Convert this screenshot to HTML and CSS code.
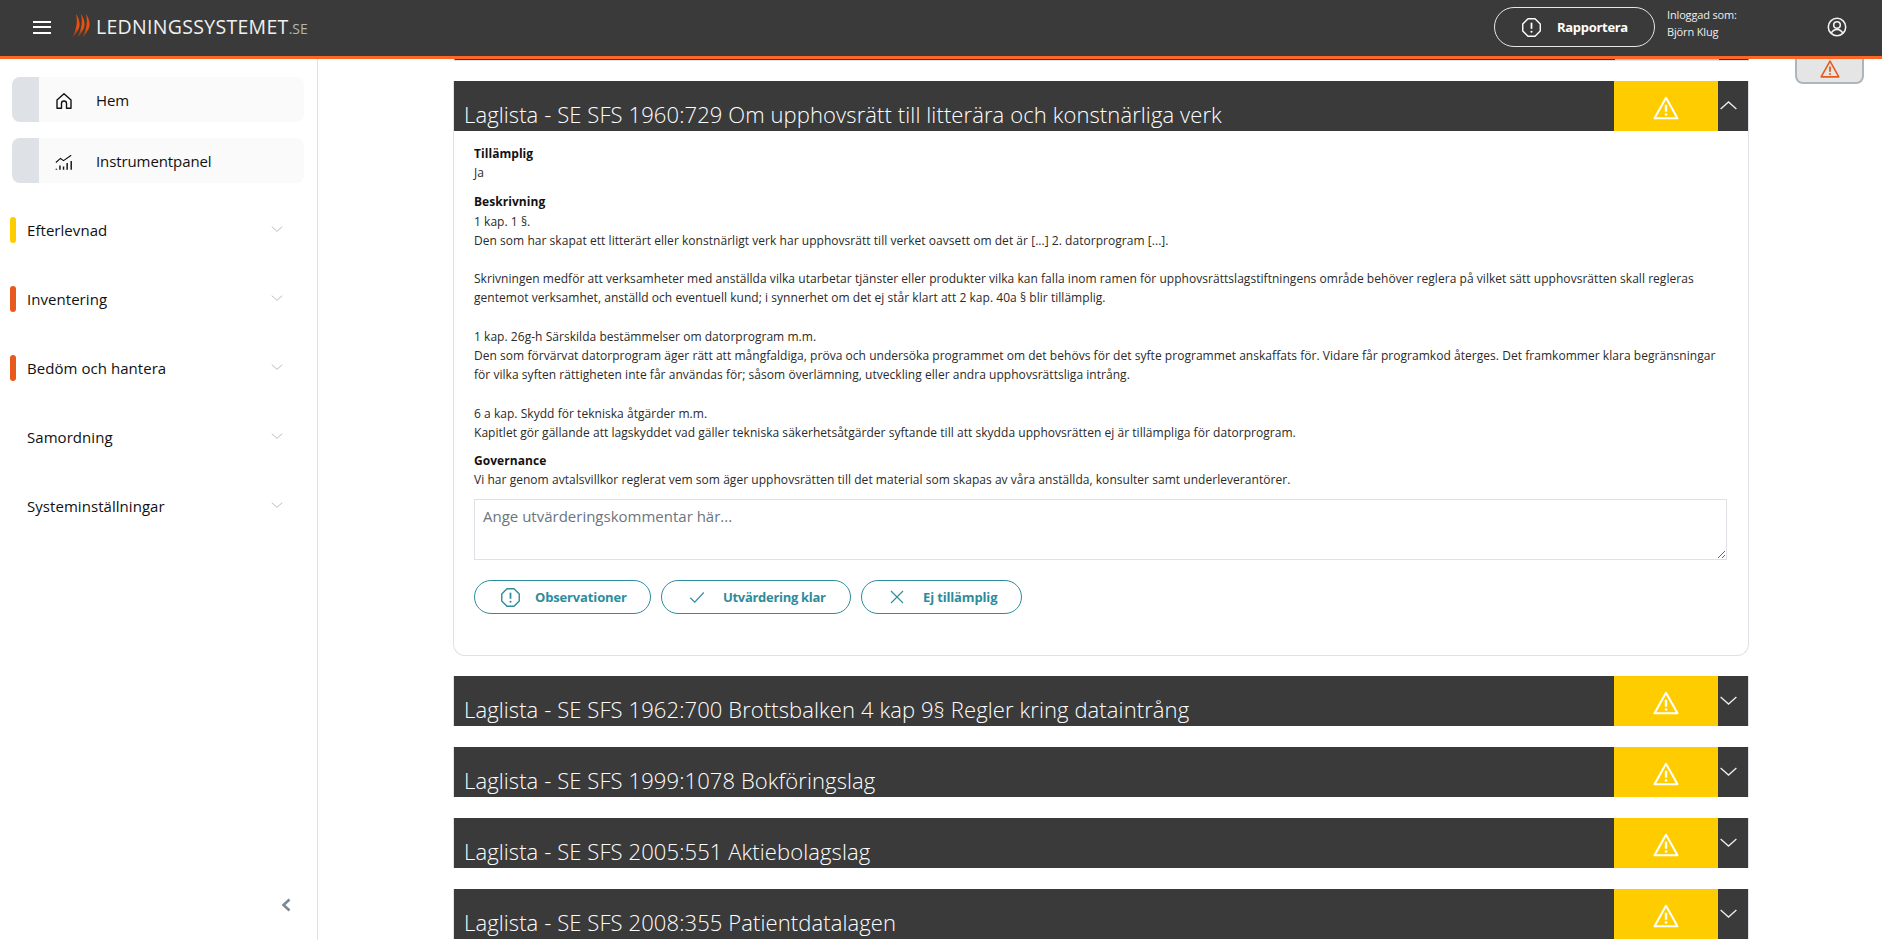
FILE: index.html
```html
<!DOCTYPE html>
<html lang="sv">
<head>
<meta charset="utf-8">
<title>Ledningssystemet</title>
<link rel="stylesheet" href="styles.css">
</head>
<body>
<svg class="defs" width="0" height="0" aria-hidden="true">
  <defs><linearGradient id="flame" x1="0" y1="0" x2="0" y2="1"><stop offset="0" stop-color="#f0500c"/><stop offset=".6" stop-color="#e8500f"/><stop offset="1" stop-color="#5c3b2e"/></linearGradient></defs>
  <symbol id="warn" viewBox="0 0 24 24"><path d="M12 2.600 22.600 21.400H1.400Z" fill="none" stroke="currentColor" stroke-width="1.900" stroke-linejoin="round"/><path d="M12 9v6.400" stroke="currentColor" stroke-width="2.200"/><circle cx="12" cy="18" r="1.200" fill="currentColor"/></symbol>
  <symbol id="octa" viewBox="0 0 24 24"><path d="M8 2h8l6 6v8l-6 6H8l-6-6V8Z" fill="none" stroke="currentColor" stroke-width="1.600" stroke-linejoin="round"/><path d="M12 6.500v7" stroke="currentColor" stroke-width="2"/><circle cx="12" cy="16.800" r="1.200" fill="currentColor"/></symbol>
  <symbol id="chev-d" viewBox="0 0 24 24"><path d="M3 8l9 8 9-8" fill="none" stroke="currentColor" stroke-width="1.500"/></symbol>
  <symbol id="chev-u" viewBox="0 0 24 24"><path d="M3 16l9-8 9 8" fill="none" stroke="currentColor" stroke-width="1.500"/></symbol>
</svg>

<header class="topbar">
  <button class="menu-btn" aria-label="Meny"><span></span><span></span><span></span></button>
  <div class="logo">
    <svg class="logo-mark" viewBox="0 0 20 24" width="20" height="24"><path d="M4 0C8 6 9 12 5.500 17 4 20 2 22 0 24 3 18 6.500 10 4 0Z" fill="url(#flame)"/><path d="M9 0C13 6 14 12 10.500 17 9 20 7 22 5 24 8 18 11.500 10 9 0Z" fill="url(#flame)"/><path d="M14 0C18 6 19 12 15.500 17 14 20 12 22 10 24 13 18 16.500 10 14 0Z" fill="url(#flame)"/></svg>
    <span class="logo-text">LEDNINGSSYSTEMET</span><span class="logo-se">.SE</span>
  </div>
  <div class="top-right">
    <button class="report-btn"><svg class="ic-oct"><use href="#octa"/></svg><span>Rapportera</span></button>
    <div class="user-info"><div>Inloggad som:</div><div>Björn Klug</div></div>
    <svg class="user-ic" viewBox="0 0 24 24" width="22" height="22" fill="none" stroke="currentColor" stroke-width="1.700"><circle cx="12" cy="12" r="9.500"/><circle cx="12" cy="9.800" r="3.600"/><path d="M5.500 19c1.500-3 3.800-4.300 6.500-4.300s5 1.300 6.500 4.300"/></svg>
  </div>
</header>

<div class="layout">
  <aside class="sidebar">
    <nav class="pinned">
      <a class="pin-item"><span class="pin-tab"></span>
        <svg class="pin-ic" viewBox="0 0 18 18" fill="none" stroke="currentColor" stroke-width="1.400"><path d="M2 8 9 1.800 16 8v8.200h-4.500V11.500a2.500 2.500 0 0 0-5 0v4.700H2Z" stroke-linejoin="round"/></svg>
        <span>Hem</span></a>
      <a class="pin-item"><span class="pin-tab"></span>
        <svg class="pin-ic" viewBox="0 0 20 18" fill="none" stroke="currentColor" stroke-width="1.300"><path d="M1 9.500 6 5l3.500 2.500L18 1.500"/><path d="M1.500 16.500v1M5.500 13v4.500M9.500 14v3.500M13.500 10v7.500M18 8v9.500" stroke-width="1.600"/></svg>
        <span>Instrumentpanel</span></a>
    </nav>
    <ul class="groups">
      <li class="group"><span class="mark mark-y"></span><span class="group-name">Efterlevnad</span><svg class="group-chev"><use href="#chev-d"/></svg></li>
      <li class="group"><span class="mark mark-o"></span><span class="group-name">Inventering</span><svg class="group-chev"><use href="#chev-d"/></svg></li>
      <li class="group"><span class="mark mark-o"></span><span class="group-name">Bedöm och hantera</span><svg class="group-chev"><use href="#chev-d"/></svg></li>
      <li class="group"><span class="mark"></span><span class="group-name">Samordning</span><svg class="group-chev"><use href="#chev-d"/></svg></li>
      <li class="group"><span class="mark"></span><span class="group-name">Systeminställningar</span><svg class="group-chev"><use href="#chev-d"/></svg></li>
    </ul>
    <svg class="collapse" viewBox="0 0 12 16" width="12" height="16"><path d="M9.500 2.500 3.500 8l6 5.500" fill="none" stroke="#7b8794" stroke-width="2.600"/></svg>
  </aside>

  <main class="main">
    <div class="stub"><span class="stub-y"></span><span class="stub-d"></span></div>

    <section class="card open">
      <div class="card-head">
        <h2>Laglista - SE SFS 1960:729 Om upphovsrätt till litterära och konstnärliga verk</h2>
        <div class="status"><svg class="ic-24"><use href="#warn"/></svg></div>
        <div class="toggle"><svg class="ic-chev"><use href="#chev-u"/></svg></div>
      </div>
      <div class="card-body">
        <h3>Tillämplig</h3>
        <p>Ja</p>
        <h3>Beskrivning</h3>
        <p class="desc">1 kap. 1 §.<br>
        Den som har skapat ett litterärt eller konstnärligt verk har upphovsrätt till verket oavsett om det är [...] 2. datorprogram [...].<br><br>
        Skrivningen medför att verksamheter med anställda vilka utarbetar tjänster eller produkter vilka kan falla inom ramen för upphovsrättslagstiftningens område behöver reglera på vilket sätt upphovsrätten skall regleras gentemot verksamhet, anställd och eventuell kund; i synnerhet om det ej står klart att 2 kap. 40a § blir tillämplig.<br><br>
        1 kap. 26g-h Särskilda bestämmelser om datorprogram m.m.<br>
        Den som förvärvat datorprogram äger rätt att mångfaldiga, pröva och undersöka programmet om det behövs för det syfte programmet anskaffats för. Vidare får programkod återges. Det framkommer klara begränsningar för vilka syften rättigheten inte får användas för; såsom överlämning, utveckling eller andra upphovsrättsliga intrång.<br><br>
        6 a kap. Skydd för tekniska åtgärder m.m.<br>
        Kapitlet gör gällande att lagskyddet vad gäller tekniska säkerhetsåtgärder syftande till att skydda upphovsrätten ej är tillämpliga för datorprogram.</p>
        <h3>Governance</h3>
        <p>Vi har genom avtalsvillkor reglerat vem som äger upphovsrätten till det material som skapas av våra anställda, konsulter samt underleverantörer.</p>
        <textarea class="comment" placeholder="Ange utvärderingskommentar här..."></textarea>
        <div class="actions">
          <button class="action a1"><svg class="ic-oct"><use href="#octa"/></svg><span>Observationer</span></button>
          <button class="action a2"><svg class="ic-18" viewBox="0 0 24 24" fill="none" stroke="currentColor" stroke-width="1.500"><path d="M3 13l6 6L21 6"/></svg><span>Utvärdering klar</span></button>
          <button class="action a3"><svg class="ic-18" viewBox="0 0 24 24" fill="none" stroke="currentColor" stroke-width="1.500"><path d="M4 4l16 16M20 4 4 20"/></svg><span>Ej tillämplig</span></button>
        </div>
      </div>
    </section>

    <section class="card closed"><div class="card-head"><h2>Laglista - SE SFS 1962:700 Brottsbalken 4 kap 9§ Regler kring dataintrång</h2><div class="status"><svg class="ic-24"><use href="#warn"/></svg></div><div class="toggle"><svg class="ic-chev"><use href="#chev-d"/></svg></div></div></section>
    <section class="card closed"><div class="card-head"><h2>Laglista - SE SFS 1999:1078 Bokföringslag</h2><div class="status"><svg class="ic-24"><use href="#warn"/></svg></div><div class="toggle"><svg class="ic-chev"><use href="#chev-d"/></svg></div></div></section>
    <section class="card closed"><div class="card-head"><h2>Laglista - SE SFS 2005:551 Aktiebolagslag</h2><div class="status"><svg class="ic-24"><use href="#warn"/></svg></div><div class="toggle"><svg class="ic-chev"><use href="#chev-d"/></svg></div></div></section>
    <section class="card closed"><div class="card-head"><h2>Laglista - SE SFS 2008:355 Patientdatalagen</h2><div class="status"><svg class="ic-24"><use href="#warn"/></svg></div><div class="toggle"><svg class="ic-chev"><use href="#chev-d"/></svg></div></div></section>
  </main>

  <div class="side-tab"><svg class="ic-20"><use href="#warn"/></svg></div>
</div>
</body>
</html>
```

FILE: styles.css
```css
* { box-sizing: border-box; }
html, body { margin: 0; height: 100%; overflow: hidden; }
body { font-family: "Open Sans", "Noto Sans", sans-serif; color: #212529; background: #fff; font-size: 12px; }
.defs { position: absolute; }
button { font-family: inherit; cursor: pointer; background: none; }

.topbar { height: 59px; background: #3a3a3a; border-bottom: 3px solid #ff6624; display: flex; align-items: center; color: #fff; position: relative; z-index: 2; }
.menu-btn { border: 0; padding: 0; margin: -2px 0 0 33px; width: 18px; height: 13px; display: flex; flex-direction: column; justify-content: space-between; }
.menu-btn span { display: block; height: 2px; background: #fff; }
.logo { display: flex; align-items: baseline; margin: -4px 0 0 21px; }
.logo-mark { align-self: center; margin-right: 4px; }
.logo-text { font-size: 19.500px; color: #f0f0f0; letter-spacing: 0.3px; }
.logo-se { font-size: 14px; color: #b5b5b5; }
.top-right { margin-left: auto; display: flex; align-items: center; }
.report-btn { width: 161px; height: 40px; margin-top: -2px; border: 1px solid #e6e6e6; border-radius: 20px; color: #fff; display: flex; align-items: center; padding: 0 0 0 26px; gap: 15px; font-size: 13px; font-weight: 700; letter-spacing: -0.3px; }
.ic-18 { width: 18px; height: 18px; flex: none; }
.ic-oct { width: 21px; height: 21px; flex: none; }
.user-info { margin: -11px 0 0 12px; width: 159px; font-size: 11px; line-height: 17px; letter-spacing: -0.15px; color: #eee; }
.user-ic { margin: -2px 34px 0 0; color: #f2f2f2; }

.layout { display: flex; height: 881px; position: relative; }
.sidebar { width: 318px; flex: none; border-right: 1px solid #dee2e6; padding: 18px 13px 0 12px; position: relative; }
.pinned { display: flex; flex-direction: column; gap: 16px; }
.pin-item { height: 45px; background: #fafafa; border-radius: 8px; display: flex; align-items: center; overflow: hidden; font-size: 15px; color: #111; }
.pin-tab { width: 27px; align-self: stretch; background: #dee2e6; flex: none; }
.pin-ic { width: 18px; height: 18px; margin: 2px 0 0 16px; color: #111; flex: none; }
.pin-item span:last-child { margin: 1px 0 0 23px; letter-spacing: -0.1px; }
.groups { list-style: none; margin: 12px 0 0; padding: 0; display: flex; flex-direction: column; }
.group { height: 69px; display: flex; align-items: center; font-size: 15px; color: #111; letter-spacing: 0.05px; }
.mark { width: 6px; height: 26px; border-radius: 3px; flex: none; margin-left: -2px; }
.mark-y { background: #ffcc00; }
.mark-o { background: #e8591c; }
.group-name { margin-left: 11px; flex: 1; }
.group-chev { width: 14px; height: 14px; color: #adb5bd; margin-right: 20px; margin-top: -2px; }
.collapse { position: absolute; left: 280px; top: 838px; }

.main { flex: 1; overflow: hidden; padding: 0 133px 0 135px; display: flex; flex-direction: column; align-items: stretch; }
.stub { height: 2px; margin-left: 1px; border-bottom: 1px solid #dee2e6; background: #3a3a3a; border-radius: 0 0 8px 8px; flex: none; display: flex; justify-content: flex-end; }
.stub-y { width: 104px; background: #ffcc00; }
.stub-d { width: 30px; }
.card { flex: none; margin-top: 20px; }
.card.open { margin-bottom: -1px; }
.card-head { height: 50px; background: #3a3a3a; display: flex; color: #fff; border: solid #dee2e6; border-width: 0 1px; }
.card-head h2 { flex: 1; margin: 0; padding: 18px 0 0 10px; font-size: 22px; font-weight: 300; line-height: 30px; letter-spacing: 0.1px; white-space: nowrap; color: #fff; }
.status { width: 104px; background: #ffcc00; color: #fff; display: flex; justify-content: center; padding-top: 14px; }
.ic-24 { width: 26px; height: 26px; }
.toggle { width: 30px; color: #eee; display: flex; justify-content: flex-start; padding-top: 14px; }
.ic-chev { width: 21px; height: 21px; }
.card-body { border: 1px solid #dee2e6; border-top: 0; border-radius: 0 0 12px 12px; padding: 13px 21px 40px 20px; height: 525px; line-height: 19.200px; }
.card.closed { margin-top: 21px; }
.card-body h3 { margin: 0; font-size: 12px; font-weight: 700; line-height: 19.200px; color: #111; letter-spacing: 0.05px; }
.card-body p { margin: 0 0 10px; font-size: 12px; letter-spacing: 0.04px; color: #2a2a2a; }
.card-body p.desc { margin-bottom: 9px; }
.comment { display: block; width: 100%; height: 61px; margin-top: 9px; border: 1px solid #dee2e6; padding: 6px 8px; font: 15px "Open Sans", sans-serif; resize: vertical; outline: 0; }
.comment::placeholder { color: #6c757d; opacity: 1; }
.actions { display: flex; gap: 10px; margin-top: 20px; }
.action { height: 34px; border: 1px solid #2d8c9c; border-radius: 17px; color: #2d8c9c; display: flex; align-items: center; padding: 0 0 0 25px; gap: 14px; font-size: 13px; font-weight: 700; letter-spacing: -0.15px; }
.a1 { width: 177px; }
.a2 { width: 190px; padding-left: 26px; gap: 17px; letter-spacing: -0.3px; }
.a3 { width: 161px; padding-left: 26px; gap: 17px; }

.side-tab { position: absolute; left: 1795px; top: -4px; width: 69px; height: 29px; background: #e5e5e5; border: 2px solid #adb5bd; border-top: 0; border-radius: 0 0 8px 8px; display: flex; align-items: flex-end; justify-content: center; padding-bottom: 3px; color: #e8591c; }
.ic-20 { width: 20px; height: 20px; }
```
